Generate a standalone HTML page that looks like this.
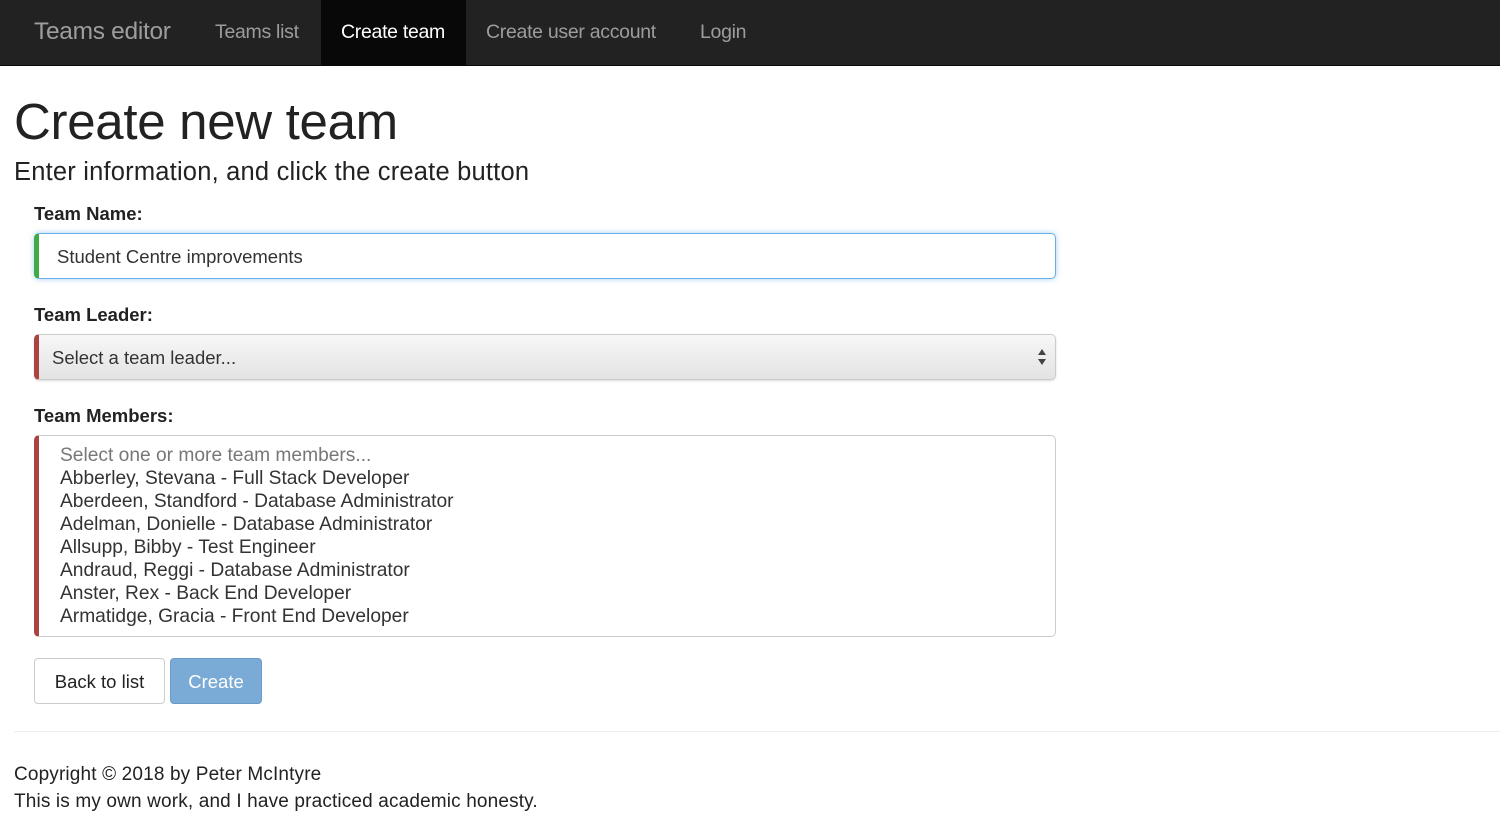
<!DOCTYPE html>
<html><head><style>
*{box-sizing:border-box}
body{margin:0;font-family:"Liberation Sans",sans-serif;color:#333;background:#fff;width:1500px;height:831px;overflow:hidden}
.nav{height:66px;background:#222;border-bottom:1px solid #080808;position:relative}
.nav a{position:absolute;top:0;height:65px;line-height:64px;font-size:19.5px;color:#9d9d9d;letter-spacing:-0.3px}
.brand{left:34px;font-size:24.5px!important}
.act{background:#080808;color:#fff!important;padding:0 20px;width:145px}
h1{position:absolute;left:14px;top:92px;margin:0;font-size:51px;font-weight:normal;color:#222;letter-spacing:-0.3px}
h3{position:absolute;left:14px;top:158px;margin:0;font-size:25.5px;font-weight:normal;color:#222;letter-spacing:0.2px}
label{position:absolute;left:34px;font-weight:bold;font-size:18.5px;color:#222}
.box{position:absolute;left:34px;width:1022px;border-radius:5px;font-size:18.5px;color:#333}
.in{top:233px;height:46px;border:1px solid #66afe9;border-left:5px solid #42a948;box-shadow:0 0 6px rgba(102,175,233,.6);padding:12px 18px}
.sel{top:334px;height:46px;border:1px solid #ccc;border-left:5px solid #a94442;background:linear-gradient(#f7f7f7,#e3e3e3);padding:12px 13px;box-shadow:0 1px 2px rgba(0,0,0,.15)}
.multi{top:435px;height:202px;border:1px solid #ccc;border-left:5px solid #a94442;padding:8px 21px;line-height:23px;font-size:19.2px}
.btn{position:absolute;top:658px;height:46px;border-radius:4px;font-size:18.5px;line-height:45px;text-align:center}
hr{position:absolute;left:14px;right:0;top:731px;margin:0;border:0;border-top:1px solid #eee}
.f{position:absolute;left:14px;font-size:19px;color:#222;letter-spacing:0.15px}
</style></head><body>
<div class="nav">
<a class="brand">Teams editor</a>
<a style="left:215px">Teams list</a>
<a class="act" style="left:321px">Create team</a>
<a style="left:486px">Create user account</a>
<a style="left:700px">Login</a>
</div>
<h1>Create new team</h1>
<h3>Enter information, and click the create button</h3>
<label style="top:203px">Team Name:</label>
<div class="box in">Student Centre improvements</div>
<label style="top:304px">Team Leader:</label>
<div class="box sel">Select a team leader...<svg style="position:absolute;right:8px;top:13px" width="10" height="18"><path d="M1 7L5 1L9 7Z M1 11L5 17L9 11Z" fill="#444"/></svg></div>
<label style="top:405px">Team Members:</label>
<div class="box multi"><span style="color:#777">Select one or more team members...</span><br>Abberley, Stevana - Full Stack Developer<br>Aberdeen, Standford - Database Administrator<br>Adelman, Donielle - Database Administrator<br>Allsupp, Bibby - Test Engineer<br>Andraud, Reggi - Database Administrator<br>Anster, Rex - Back End Developer<br>Armatidge, Gracia - Front End Developer</div>
<div class="btn" style="left:34px;width:131px;border:1px solid #ccc;color:#222">Back to list</div>
<div class="btn" style="left:170px;width:92px;background:#7aaad6;border:1px solid #6a9bc8;color:#fff">Create</div>
<hr>
<div class="f" style="top:764px">Copyright © 2018 by Peter McIntyre</div>
<div class="f" style="top:791px">This is my own work, and I have practiced academic honesty.</div>
</body></html>
